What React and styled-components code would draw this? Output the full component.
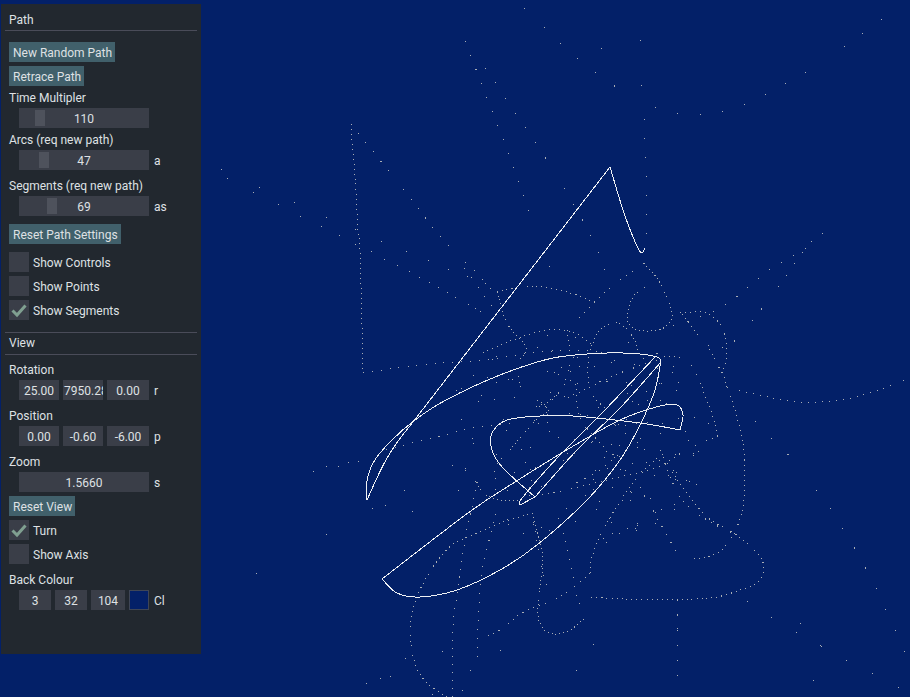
import React from "react";
import styled, { createGlobalStyle } from "styled-components";

const GlobalStyle = createGlobalStyle`
  html, body {
    margin: 0;
    padding: 0;
    background: #032068;
  }
`;

// Catmull-Rom through the points, so the curves stay readable as plain coordinates
const smooth = (pts) => {
  let d = `M${pts[0][0]} ${pts[0][1]}`;
  for (let i = 0; i < pts.length - 1; i++) {
    const p0 = pts[i - 1] || pts[i];
    const p1 = pts[i];
    const p2 = pts[i + 1];
    const p3 = pts[i + 2] || p2;
    const c1x = p1[0] + (p2[0] - p0[0]) / 6;
    const c1y = p1[1] + (p2[1] - p0[1]) / 6;
    const c2x = p2[0] - (p3[0] - p1[0]) / 6;
    const c2y = p2[1] - (p3[1] - p1[1]) / 6;
    d += ` C${c1x} ${c1y} ${c2x} ${c2y} ${p2[0]} ${p2[1]}`;
  }
  return d;
};

const solidCurves = [
  [[367, 500], [366.7, 483], [373, 463], [390, 442], [415, 420], [446, 400], [500, 375], [553, 358], [607, 353], [640, 354], [657, 357], [661, 360]],
  [[661, 360], [655, 390], [640, 425], [620, 460], [587, 500], [537, 545], [500, 570], [457, 590], [420, 597], [397, 593], [382, 579]],
  [[382, 579], [468, 513], [515, 482], [570, 448], [620, 420], [660, 406], [677, 405], [683, 415], [680, 430]],
  [[680, 430], [640, 423], [573, 416], [540, 416], [507, 420], [492, 433], [492, 450], [503, 468], [535, 497]],
  [[535, 497], [520, 505]],
  [[520, 505], [523, 497], [560, 455], [603, 412], [655, 357]],
  [[661, 362], [620, 408], [577, 450], [535, 497]],
  [[367, 500], [390, 453], [430, 400], [610, 167]],
  [[610, 167], [623, 210], [633, 237], [639, 250], [642, 253], [645, 248]],
];

const dottedCurves = [
  { gap: 22, pts: [[560, 43], [589, 67], [632, 97], [675, 113], [699, 115], [725, 111], [753, 101], [801, 75], [851, 42], [896, 8]] },
  { gap: 4, pts: [[351, 124], [352, 141], [354, 163], [356, 193], [358, 233], [360, 250], [363, 370]] },
  { gap: 8, pts: [[363, 373], [397, 368], [442, 363], [483, 360], [540, 352], [590, 350]] },
  { gap: 18, pts: [[644, 119], [645, 144], [646, 165], [646, 195], [646, 238]] },
  { gap: 11, pts: [[358, 133], [403, 189], [442, 238], [486, 283], [510, 315]] },
  { gap: 14, pts: [[465, 41], [487, 98], [511, 160], [531, 216], [545, 254], [553, 277]] },
  { gap: 17, pts: [[485, 68], [517, 115], [552, 168], [589, 232], [609, 280]] },
  { gap: 13, pts: [[708, 346], [731, 344], [767, 302], [811, 242], [826, 233]] },
  { gap: 13, pts: [[660, 330], [720, 308], [772, 268], [817, 243]] },
  { gap: 6, pts: [[726, 386], [758, 395], [801, 402], [841, 400], [876, 391], [907, 379]] },
  { gap: 4, pts: [[680, 313], [703, 312], [712, 316], [722, 327], [726, 343], [726, 363], [723, 373], [734, 407], [743, 443], [745, 480], [743, 507], [737, 527], [729, 542], [717, 553], [703, 558], [692, 558]] },
  { gap: 4, pts: [[682, 314], [700, 337], [713, 355], [723, 377]] },
  { gap: 4, pts: [[718, 436], [713, 417], [703, 390], [698, 377], [688, 362], [677, 357], [660, 356]] },
  { gap: 5, pts: [[718, 436], [690, 448], [657, 467], [607, 480], [557, 492], [537, 495]] },
  { gap: 4, pts: [[660, 450], [673, 473], [687, 493], [707, 517], [733, 533], [757, 553], [764, 568], [758, 582], [740, 590], [717, 597], [693, 599], [665, 600], [623, 599], [587, 597]] },
  { gap: 22, pts: [[726, 386], [763, 430], [793, 460], [835, 516], [873, 582], [907, 658]] },
  { gap: 28, pts: [[747, 601], [787, 627], [835, 654], [906, 691]] },
  { gap: 14, pts: [[677, 600], [677, 645], [677, 689]] },
  { gap: 4, pts: [[657, 458], [640, 475], [623, 497], [603, 530], [592, 557], [590, 573]] },
  { gap: 5, pts: [[590, 573], [567, 592], [547, 603], [522, 613], [500, 630], [483, 638]] },
  { gap: 3, pts: [[584, 619], [570, 630], [553, 634], [542, 627], [538, 613], [540, 587], [543, 563], [540, 543], [532, 513]] },
  { gap: 4, pts: [[533, 513], [500, 523], [473, 535], [452, 545], [433, 567], [417, 597], [410, 630], [415, 663], [427, 683], [447, 697]] },
  { gap: 7, pts: [[453, 697], [453, 627], [457, 597], [461, 567], [467, 527], [472, 507], [477, 482]] },
  { gap: 3, pts: [[477, 482], [483, 493], [500, 500], [520, 500]] },
  { gap: 8, pts: [[477, 657], [480, 587], [486, 553], [497, 510]] },
  { gap: 8, pts: [[510, 423], [473, 428], [437, 437], [383, 450]] },
  { gap: 3, pts: [[510, 450], [533, 423], [547, 413]] },
  { gap: 3, pts: [[547, 415], [548, 407], [537, 400]] },
  { gap: 3, pts: [[644, 263], [660, 283], [672, 313], [665, 327], [650, 331], [633, 328], [627, 317], [633, 297], [647, 286]] },
  { gap: 6, pts: [[644, 263], [620, 280], [600, 297], [577, 320]] },
  { gap: 4, pts: [[497, 292], [533, 286], [567, 292], [597, 303]] },
  { gap: 3, pts: [[497, 292], [507, 323], [523, 343], [526, 352], [518, 360]] },
  { gap: 4, pts: [[483, 353], [513, 340], [547, 330], [573, 332], [590, 343], [598, 353]] },
  { gap: 3, pts: [[590, 350], [600, 330], [617, 323], [633, 337], [640, 357]] },
  { gap: 4, pts: [[567, 330], [570, 357], [563, 387], [548, 402], [547, 413]] },
  { gap: 4, pts: [[588, 357], [590, 390], [607, 410]] },
  { gap: 5, pts: [[577, 383], [580, 417], [607, 450], [618, 455]] },
  { gap: 5, pts: [[657, 360], [620, 373], [590, 387], [563, 400]] },
  { gap: 7, pts: [[618, 455], [600, 470], [577, 483]] },
  { gap: 8, pts: [[640, 487], [660, 523], [677, 553]] },
  { gap: 6, pts: [[663, 457], [680, 497], [707, 520], [737, 535]] },
  { gap: 8, pts: [[532, 513], [543, 573], [550, 590]] },
  { gap: 8, pts: [[563, 533], [570, 563], [578, 600], [582, 610]] },
];

const looseDots = [
  [221, 169], [227, 178], [253, 192], [259, 187], [278, 204], [294, 202], [300, 216], [321, 226], [326, 217], [339, 235],
  [355, 229], [355, 244], [371, 251], [381, 241], [384, 259], [397, 265], [406, 251], [409, 271], [419, 277], [428, 260],
  [429, 282], [438, 287], [448, 269], [447, 292], [455, 297], [464, 268], [468, 304], [467, 276], [471, 277], [478, 287],
  [475, 308], [485, 283], [484, 296], [480, 311], [491, 305], [524, 8], [544, 27], [640, 40], [641, 85],
  [601, 48], [313, 471], [326, 466], [338, 466], [358, 461], [348, 462], [256, 573], [326, 534], [372, 508],
  [404, 490], [412, 511], [385, 505], [380, 678], [366, 683], [432, 694], [442, 651], [390, 676], [405, 658],
  [576, 670], [593, 644], [677, 614], [677, 628], [813, 680], [820, 645], [800, 623], [500, 650], [470, 670], [462, 690],
];

// the dense middle of the figure: many short segments, seeded so it stays the same
const clusterDots = (() => {
  const dots = [];
  let seed = 7;
  const next = () => {
    seed = (seed * 16807) % 2147483647;
    return seed / 2147483647;
  };
  while (dots.length < 200) {
    const x = 440 + next() * 270;
    const y = 330 + next() * 220;
    const dx = (x - 575) / 135;
    const dy = (y - 440) / 110;
    if (dx * dx + dy * dy < 1) dots.push([Math.round(x), Math.round(y)]);
  }
  return dots;
})();

const Page = styled.div`
  position: relative;
  width: 910px;
  height: 697px;
  overflow: hidden;
  background: #032068;
  padding: 4px 0 0 1px;
  box-sizing: border-box;
  font-family: Roboto, "Liberation Sans", sans-serif;
  font-size: 12px;
  color: #dfe1e4;
`;

const Canvas = styled.svg`
  position: absolute;
  inset: 0;
  shape-rendering: crispEdges;
`;

const Panel = styled.div`
  position: relative;
  box-sizing: border-box;
  width: 200px;
  height: 650px;
  padding: 8px 4px 0;
  background: #22282f;
`;

const SectionHead = styled.div`
  height: ${(p) => p.$h || 18}px;
  line-height: ${(p) => p.$h || 16}px;
  padding-left: 4px;
  border-bottom: 1px solid #4a4c59;
`;

const TopRule = styled.div`
  margin-top: ${(p) => p.$top || 0}px;
  border-top: 1px solid #4a4c59;
`;

const Button = styled.div`
  width: fit-content;
  height: 20px;
  line-height: 22px;
  padding: 0 3px 0 4px;
  margin: ${(p) => p.$top || 4}px 0 0 4px;
  background: #41606b;
  white-space: nowrap;
`;

const Label = styled.div`
  height: 15px;
  line-height: 16px;
  padding-left: 4px;
  margin-top: ${(p) => p.$top || 0}px;
`;

const Row = styled.div`
  display: flex;
  gap: 4px;
  height: 20px;
  line-height: 22px;
  margin: 3px 0 0 14px;
`;

const Field = styled.div`
  flex: 0 0 ${(p) => p.$w}px;
  background: #3a3e48;
  text-align: center;
  overflow: hidden;
  white-space: nowrap;
`;

const ClippedField = styled(Field)`
  text-align: left;
  padding-left: 1px;
  box-sizing: border-box;
`;

const Slider = styled.div`
  position: relative;
  flex: 0 0 130px;
  background: #3a3e48;
  text-align: center;
`;

const Thumb = styled.span`
  position: absolute;
  top: 2px;
  bottom: 2px;
  left: ${(p) => p.$left}px;
  width: 10px;
  background: #4e525c;
`;

const SliderValue = styled.span`
  position: relative;
`;

const Suffix = styled.span`
  margin-left: 1px;
`;

const Swatch = styled.div`
  flex: 0 0 20px;
  box-sizing: border-box;
  background: #032068;
  border: 1px solid #3f4656;
`;

const CheckRow = styled.div`
  display: flex;
  gap: 4px;
  height: 20px;
  line-height: 22px;
  margin: ${(p) => p.$top || 4}px 0 0 4px;
`;

const CheckBox = styled.div`
  width: 20px;
  height: 20px;
  background: #3a3e48;
`;

const CheckRun = ({ label, on, top }) => (
  <CheckRow $top={top}>
    <CheckBox>
      {on && (
        <svg width="20" height="20" viewBox="0 0 20 20">
          <path d="M3.5 10.5 L8 15 L16.5 5.5" fill="none" stroke="#7f9f90" strokeWidth="3" />
        </svg>
      )}
    </CheckBox>
    {label}
  </CheckRow>
);

const SliderRow = ({ value, left, suffix }) => (
  <Row>
    <Slider>
      <Thumb $left={left} />
      <SliderValue>{value}</SliderValue>
    </Slider>
    {suffix && <Suffix>{suffix}</Suffix>}
  </Row>
);

export default function App() {
  return (
    <Page>
      <GlobalStyle />
      {/* The figure behind the settings window */}
      <Canvas width="910" height="697" viewBox="0 0 910 697">
        {dottedCurves.map((c, i) => (
          <path
            key={i}
            d={smooth(c.pts)}
            fill="none"
            stroke="#a9aeb6"
            strokeWidth="1"
            strokeDasharray={`1 ${c.gap}`}
          />
        ))}
        {looseDots.concat(clusterDots).map(([x, y], i) => (
          <rect key={i} x={x} y={y} width="1" height="1" fill="#a9aeb6" />
        ))}
        {solidCurves.map((pts, i) => (
          <path key={i} d={smooth(pts)} fill="none" stroke="#eef0f4" strokeWidth="1" />
        ))}
      </Canvas>

      <Panel>
        <SectionHead>Path</SectionHead>
        <Button $top={11}>New Random Path</Button>
        <Button>Retrace Path</Button>
        <Label $top={4}>Time Multipler</Label>
        <SliderRow value="110" left={16} />
        <Label $top={4}>Arcs (req new path)</Label>
        <SliderRow value="47" left={20} suffix="a" />
        <Label $top={8}>Segments (req new path)</Label>
        <SliderRow value="69" left={28} suffix="as" />
        <Button $top={8}>Reset Path Settings</Button>
        <CheckRun top={8} label="Show Controls" />
        <CheckRun label="Show Points" />
        <CheckRun on label="Show Segments" />

        <TopRule $top={12} />
        <SectionHead $h={21}>View</SectionHead>
        <Label $top={7}>Rotation</Label>
        <Row>
          <Field $w={40}>25.00</Field>
          <ClippedField $w={40}>7950.28</ClippedField>
          <Field $w={42}>0.00</Field>
          <Suffix>r</Suffix>
        </Row>
        <Label $top={8}>Position</Label>
        <Row>
          <Field $w={40}>0.00</Field>
          <Field $w={40}>-0.60</Field>
          <Field $w={42}>-6.00</Field>
          <Suffix>p</Suffix>
        </Row>
        <Label $top={8}>Zoom</Label>
        <Row>
          <Field $w={130}>1.5660</Field>
          <Suffix>s</Suffix>
        </Row>
        <Button>Reset View</Button>
        <CheckRun on label="Turn" />
        <CheckRun label="Show Axis" />
        <Label $top={8}>Back Colour</Label>
        <Row>
          <Field $w={32}>3</Field>
          <Field $w={32}>32</Field>
          <Field $w={34}>104</Field>
          <Swatch />
          <Suffix>Cl</Suffix>
        </Row>
      </Panel>
    </Page>
  );
}
